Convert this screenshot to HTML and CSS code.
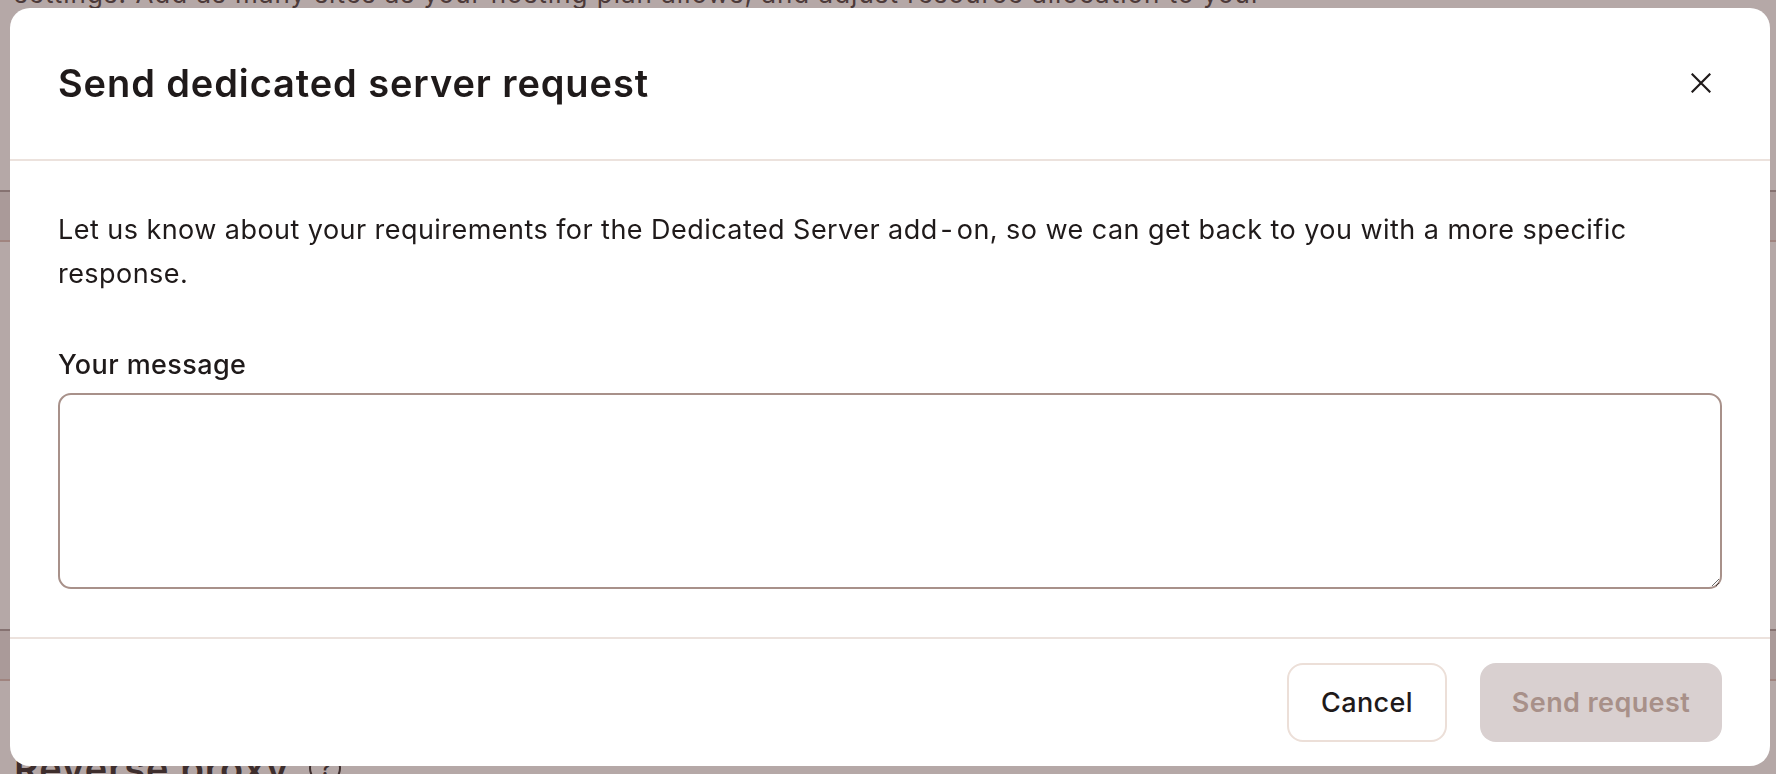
FILE: index.html
```html
<!DOCTYPE html>
<html lang="en">
<head>
<meta charset="utf-8">
<title>Send dedicated server request</title>
<link rel="stylesheet" href="styles.css">
</head>
<body>
<div class="page">
  <p class="page-intro">settings. Add as many sites as your hosting plan allows, and adjust resource allocation to your</p>
  <div class="page-card"></div>
  <div class="page-card page-card-low"></div>
  <h2 class="page-heading">Reverse proxy <span class="help">?</span></h2>
</div>
<div class="overlay">
  <div class="modal" role="dialog" aria-labelledby="modal-title">
    <header class="modal-header">
      <h1 id="modal-title" class="modal-title">Send dedicated server request</h1>
      <button class="close" aria-label="Close">
        <svg viewBox="0 0 20 20" width="20" height="20" aria-hidden="true"><path d="M1.5 1.5 L18.5 18.5 M18.5 1.5 L1.5 18.5" stroke="#1f1a1a" stroke-width="2.2" stroke-linecap="square" fill="none"/></svg>
      </button>
    </header>
    <section class="modal-body">
      <p class="intro">Let us know about your requirements for the Dedicated Server add<span class="nbh">‑</span>on, so we can get back to you with a more specific response.</p>
      <label class="label" for="msg">Your message</label>
      <textarea id="msg" class="message"></textarea>
    </section>
    <footer class="modal-footer">
      <button class="btn btn-secondary">Cancel</button>
      <button class="btn btn-primary" disabled>Send request</button>
    </footer>
  </div>
</div>
</body>
</html>
```
FILE: styles.css
```css
* { box-sizing: border-box; }
html, body { margin: 0; height: 100%; }
body {
  font-family: Inter, "Noto Sans", "Liberation Sans", sans-serif;
  background: #ffffff;
  color: #1f1a1a;
  overflow: hidden;
}
.page {
  height: 100%;
  display: flex;
  flex-direction: column;
  padding: 0 14px;
}
.page-intro {
  margin: -21px 0 0;
  font-size: 26px;
  letter-spacing: 1px;
  line-height: 30px;
  color: #3a3030;
  white-space: nowrap;
}
.page-card {
  margin: 181px -14px 0;
  height: 52px;
  flex: none;
  background: #ebe5e4;
  border-top: 2px solid #a69a99;
  border-bottom: 2px solid #d8bcb4;
}
.page-card-low {
  margin-top: 387px;
}
.page-heading {
  margin: auto 0 -17px;
  font-size: 38px;
  letter-spacing: 1px;
  font-weight: 600;
  color: #1f1a1a;
  display: flex;
  align-items: center;
  gap: 20px;
}
.help {
  width: 32px; height: 32px;
  border: 2px solid #1f1a1a;
  border-radius: 50%;
  font-size: 20px;
  letter-spacing: 0;
  display: inline-flex; align-items: center; justify-content: center;
}
.overlay {
  position: fixed;
  inset: 0;
  background: rgba(98, 70, 68, 0.47);
  padding: 8px 6px 8px 10px;
}
.modal {
  background: #ffffff;
  border-radius: 20px;
  width: 1760px;
  height: 758px;
  display: flex;
  flex-direction: column;
  overflow: hidden;
}
.modal-header {
  height: 153px;
  flex: none;
  display: flex;
  align-items: center;
  justify-content: space-between;
  padding: 0 48px 2px;
  border-bottom: 2px solid #ece2dd;
}
.modal-title {
  margin: 0;
  font-size: 38px;
  font-weight: 600;
  letter-spacing: 0.9px;
  color: #1f1a1a;
}
.close {
  background: none;
  border: 0;
  padding: 0;
  width: 20px; height: 20px;
  margin-right: 11px;
  cursor: pointer;
}
.close svg { display: block; }
.modal-body {
  flex: 1;
  display: flex;
  flex-direction: column;
  padding: 47px 48px 48px;
  border-bottom: 2px solid #ece2dd;
}
.intro {
  margin: 0 0 51px;
  font-size: 27px;
  letter-spacing: 0.45px;
  line-height: 44px;
  color: #1f1a1a;
}
.nbh {
  margin: 0 5px 0 4px;
}
.label {
  font-size: 27px;
  letter-spacing: 0.4px;
  font-weight: 500;
  line-height: 36px;
  margin-bottom: 10px;
}
.message {
  height: 196px;
  flex: none;
  width: 100%;
  border: 2px solid #a8918a;
  border-radius: 13px;
  font: inherit;
  font-size: 26px;
  padding: 12px 16px;
  resize: vertical;
  outline: none;
}
.modal-footer {
  flex: none;
  height: 127px;
  display: flex;
  align-items: center;
  justify-content: flex-end;
  gap: 33px;
  padding: 0 48px;
}
.btn {
  height: 79px;
  border-radius: 16px;
  font-family: inherit;
  font-size: 27px;
  letter-spacing: 0.4px;
  font-weight: 500;
  padding: 0;
}
.btn-secondary {
  width: 160px;
  background: #ffffff;
  border: 2px solid #ecdfd8;
  color: #1f1a1a;
}
.btn-primary {
  width: 242px;
  background: #d9d0d0;
  border: 0;
  color: #a89089;
  font-weight: 600;
}
```
